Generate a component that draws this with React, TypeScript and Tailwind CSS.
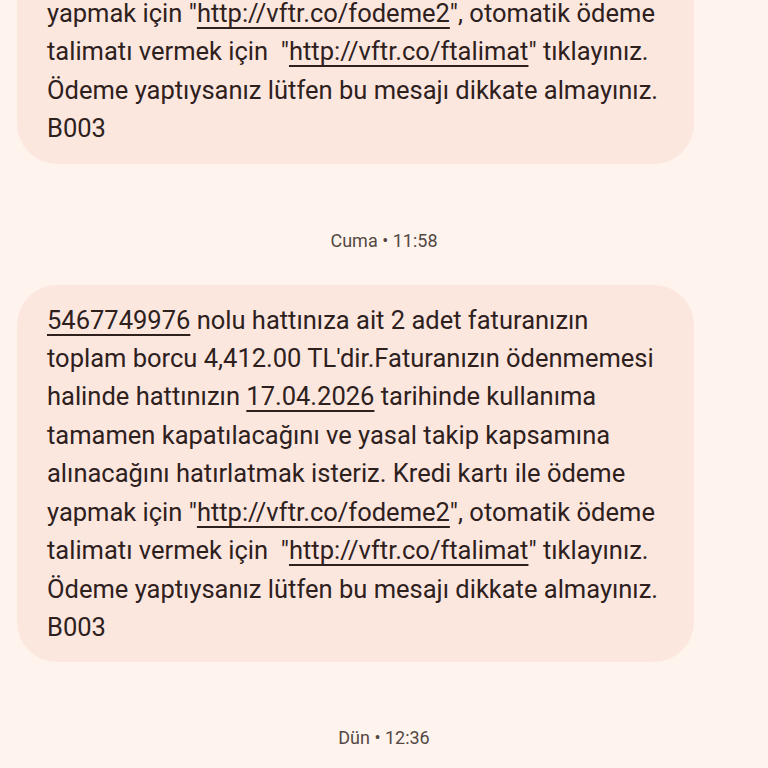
import React from "react";

const U = ({ children }: { children: React.ReactNode }) => (
  <span className="underline decoration-[1.5px] underline-offset-[5px]">{children}</span>
);

const Message = () => (
  <div className="ml-[17px] w-[677px] rounded-[40px] bg-[#fce7df] pl-[30px] pr-4 py-4 text-[25.5px] leading-[38.4px] text-[#2e211d]">
    <div className="whitespace-pre">
      <U>5467749976</U> nolu hattınıza ait 2 adet faturanızın
    </div>
    <div className="whitespace-pre">toplam borcu 4,412.00 TL'dir.Faturanızın ödenmemesi</div>
    <div className="whitespace-pre">
      halinde hattınızın <U>17.04.2026</U> tarihinde kullanıma
    </div>
    <div className="whitespace-pre">tamamen kapatılacağını ve yasal takip kapsamına</div>
    <div className="whitespace-pre">alınacağını hatırlatmak isteriz. Kredi kartı ile ödeme</div>
    <div className="whitespace-pre">
      yapmak için "<U>http://vftr.co/fodeme2</U>", otomatik ödeme
    </div>
    <div className="whitespace-pre">
      talimatı vermek için  "<U>http://vftr.co/ftalimat</U>" tıklayınız.
    </div>
    <div className="whitespace-pre">Ödeme yaptıysanız lütfen bu mesajı dikkate almayınız.</div>
    <div className="whitespace-pre">B003</div>
  </div>
);

const Stamp = ({ text }: { text: string }) => (
  <div className="text-center text-[18px] leading-[24px] text-[#544844]">{text}</div>
);

export default function App() {
  return (
    <div
      className="h-[768px] w-[768px] overflow-hidden bg-[#fef4ed]"
      style={{ fontFamily: "Roboto, 'Noto Sans', sans-serif" }}
    >
      <div className="-mt-[214px] flex flex-col">
        <Message />
        <div className="mt-[65px]">
          <Stamp text="Cuma • 11:58" />
        </div>
        <div className="mt-[32px]">
          <Message />
        </div>
        <div className="mt-[64px]">
          <Stamp text="Dün • 12:36" />
        </div>
      </div>
    </div>
  );
}
